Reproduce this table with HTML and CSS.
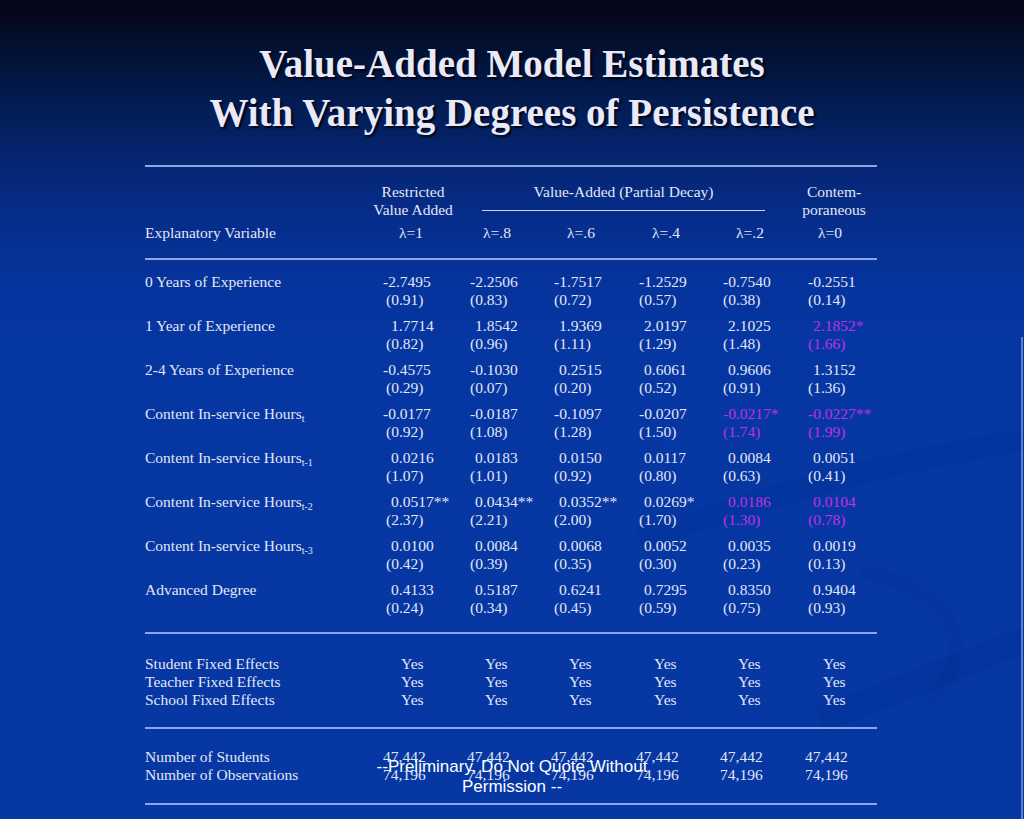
FILE: index.html
```html
<!DOCTYPE html>
<html lang="en">
<head>
<meta charset="utf-8">
<title>Value-Added Model Estimates</title>
<link rel="stylesheet" href="styles.css">
</head>
<body>
<div class="slide">
  <svg class="decor" width="1024" height="819" viewBox="0 0 1024 819" aria-hidden="true">
    <path d="M640 540 C 780 490, 900 460, 1024 440" stroke="#022a88" stroke-width="22" fill="none" opacity="0.18"/>
    <path d="M860 572 C 950 585, 985 650, 925 705" stroke="#022a88" stroke-width="14" fill="none" opacity="0.16"/>
    <path d="M820 720 C 900 690, 960 665, 1024 640" stroke="#022a88" stroke-width="26" fill="none" opacity="0.2"/>
    <path d="M560 500 C 640 470, 700 430, 760 400" stroke="#0a40b0" stroke-width="30" fill="none" opacity="0.15"/>
    <rect x="1021" y="337" width="2" height="482" fill="#7390d8" opacity="0.8"/>
  </svg>

  <h1 class="title">Value-Added Model Estimates<br>With Varying Degrees of Persistence</h1>

  <div class="table">
    <div class="rule r1"></div>

    <div class="head cols">
      <div class="h-restricted">Restricted<br>Value Added</div>
      <div class="h-va"><div>Value-Added (Partial Decay)</div><div class="h-line"></div></div>
      <div class="h-cont">Contem-<br>poraneous</div>
    </div>

    <div class="lam cols">
      <div>Explanatory Variable</div>
      <div class="lc">λ=1</div>
      <div class="lc">λ=.8</div>
      <div class="lc">λ=.6</div>
      <div class="lc">λ=.4</div>
      <div class="lc">λ=.2</div>
      <div class="lc last">λ=0</div>
    </div>

    <div class="rule r2"></div>

    <div class="groups">
      <div class="grp cols">
        <div>0 Years of Experience</div>
        <div><span class="v m">-2.7495</span><span class="v">(0.91)</span></div>
        <div><span class="v">-2.2506</span><span class="v">(0.83)</span></div>
        <div><span class="v">-1.7517</span><span class="v">(0.72)</span></div>
        <div><span class="v">-1.2529</span><span class="v">(0.57)</span></div>
        <div><span class="v">-0.7540</span><span class="v">(0.38)</span></div>
        <div><span class="v">-0.2551</span><span class="v">(0.14)</span></div>
      </div>
      <div class="grp cols">
        <div>1 Year of Experience</div>
        <div><span class="v p">1.7714</span><span class="v">(0.82)</span></div>
        <div><span class="v p">1.8542</span><span class="v">(0.96)</span></div>
        <div><span class="v p">1.9369</span><span class="v">(1.11)</span></div>
        <div><span class="v p">2.0197</span><span class="v">(1.29)</span></div>
        <div><span class="v p">2.1025</span><span class="v">(1.48)</span></div>
        <div class="sig"><span class="v p">2.1852*</span><span class="v">(1.66)</span></div>
      </div>
      <div class="grp cols">
        <div>2-4 Years of Experience</div>
        <div><span class="v m">-0.4575</span><span class="v">(0.29)</span></div>
        <div><span class="v">-0.1030</span><span class="v">(0.07)</span></div>
        <div><span class="v p">0.2515</span><span class="v">(0.20)</span></div>
        <div><span class="v p">0.6061</span><span class="v">(0.52)</span></div>
        <div><span class="v p">0.9606</span><span class="v">(0.91)</span></div>
        <div><span class="v p">1.3152</span><span class="v">(1.36)</span></div>
      </div>
      <div class="grp cols">
        <div>Content In-service Hours<span class="sub">t</span></div>
        <div><span class="v m">-0.0177</span><span class="v">(0.92)</span></div>
        <div><span class="v">-0.0187</span><span class="v">(1.08)</span></div>
        <div><span class="v">-0.1097</span><span class="v">(1.28)</span></div>
        <div><span class="v">-0.0207</span><span class="v">(1.50)</span></div>
        <div class="sig"><span class="v">-0.0217*</span><span class="v">(1.74)</span></div>
        <div class="sig"><span class="v">-0.0227**</span><span class="v">(1.99)</span></div>
      </div>
      <div class="grp cols">
        <div>Content In-service Hours<span class="sub">t-1</span></div>
        <div><span class="v p">0.0216</span><span class="v">(1.07)</span></div>
        <div><span class="v p">0.0183</span><span class="v">(1.01)</span></div>
        <div><span class="v p">0.0150</span><span class="v">(0.92)</span></div>
        <div><span class="v p">0.0117</span><span class="v">(0.80)</span></div>
        <div><span class="v p">0.0084</span><span class="v">(0.63)</span></div>
        <div><span class="v p">0.0051</span><span class="v">(0.41)</span></div>
      </div>
      <div class="grp cols">
        <div>Content In-service Hours<span class="sub">t-2</span></div>
        <div><span class="v p">0.0517**</span><span class="v">(2.37)</span></div>
        <div><span class="v p">0.0434**</span><span class="v">(2.21)</span></div>
        <div><span class="v p">0.0352**</span><span class="v">(2.00)</span></div>
        <div><span class="v p">0.0269*</span><span class="v">(1.70)</span></div>
        <div class="sig"><span class="v p">0.0186</span><span class="v">(1.30)</span></div>
        <div class="sig"><span class="v p">0.0104</span><span class="v">(0.78)</span></div>
      </div>
      <div class="grp cols">
        <div>Content In-service Hours<span class="sub">t-3</span></div>
        <div><span class="v p">0.0100</span><span class="v">(0.42)</span></div>
        <div><span class="v p">0.0084</span><span class="v">(0.39)</span></div>
        <div><span class="v p">0.0068</span><span class="v">(0.35)</span></div>
        <div><span class="v p">0.0052</span><span class="v">(0.30)</span></div>
        <div><span class="v p">0.0035</span><span class="v">(0.23)</span></div>
        <div><span class="v p">0.0019</span><span class="v">(0.13)</span></div>
      </div>
      <div class="grp cols">
        <div>Advanced Degree</div>
        <div><span class="v p">0.4133</span><span class="v">(0.24)</span></div>
        <div><span class="v p">0.5187</span><span class="v">(0.34)</span></div>
        <div><span class="v p">0.6241</span><span class="v">(0.45)</span></div>
        <div><span class="v p">0.7295</span><span class="v">(0.59)</span></div>
        <div><span class="v p">0.8350</span><span class="v">(0.75)</span></div>
        <div><span class="v p">0.9404</span><span class="v">(0.93)</span></div>
      </div>
    </div>

    <div class="rule r3"></div>

    <div class="fe">
      <div class="cols">
        <div>Student Fixed Effects</div>
        <div class="yes">Yes</div><div class="yes">Yes</div><div class="yes">Yes</div><div class="yes">Yes</div><div class="yes">Yes</div><div class="yes">Yes</div>
      </div>
      <div class="cols">
        <div>Teacher Fixed Effects</div>
        <div class="yes">Yes</div><div class="yes">Yes</div><div class="yes">Yes</div><div class="yes">Yes</div><div class="yes">Yes</div><div class="yes">Yes</div>
      </div>
      <div class="cols">
        <div>School Fixed Effects</div>
        <div class="yes">Yes</div><div class="yes">Yes</div><div class="yes">Yes</div><div class="yes">Yes</div><div class="yes">Yes</div><div class="yes">Yes</div>
      </div>
    </div>

    <div class="rule r4"></div>

    <div class="ns">
      <div class="cols">
        <div>Number of Students</div>
        <div class="n">47,442</div><div class="n">47,442</div><div class="n">47,442</div><div class="n">47,442</div><div class="n">47,442</div><div class="n">47,442</div>
      </div>
      <div class="cols">
        <div>Number of Observations</div>
        <div class="n">74,196</div><div class="n">74,196</div><div class="n">74,196</div><div class="n">74,196</div><div class="n">74,196</div><div class="n">74,196</div>
      </div>
    </div>

    <div class="rule r5"></div>
  </div>

  <div class="watermark">--Preliminary, Do Not Quote Without<br>Permission --</div>
</div>
</body>
</html>
```

FILE: styles.css
```css
html, body {
  margin: 0;
  padding: 0;
}

body {
  width: 1024px;
  height: 819px;
  overflow: hidden;
  font-family: "Liberation Serif", "Times New Roman", serif;
  color: #e3e7f6;
  background: linear-gradient(to bottom,
    #05051a 0px,
    #04061c 14px,
    #020f2c 40px,
    #03194a 90px,
    #05246c 150px,
    #062c88 210px,
    #06339c 280px,
    #0636a2 340px,
    #0637a3 819px);
}

.slide {
  position: relative;
  width: 1024px;
  height: 819px;
}

.decor {
  position: absolute;
  left: 0;
  top: 0;
}

.title {
  position: relative;
  margin: 0;
  padding-top: 39px;
  font-size: 39px;
  line-height: 49px;
  font-weight: bold;
  text-align: center;
  color: #e9e9f8;
  text-shadow: 2px 2px 2px rgba(0, 0, 16, 0.9);
}

.table {
  position: relative;
  margin-left: 145px;
  width: 732px;
  font-size: 15.5px;
  line-height: 18px;
  white-space: nowrap;
}

.cols {
  display: grid;
  grid-template-columns: 241px 84px 84px 85px 84px 85px 69px;
}

.rule {
  height: 2px;
  background: #8ea7e4;
}

.r1 { margin-top: 28px; }
.r2 { margin-top: 16px; }
.r3 { margin-top: 15px; }
.r4 { margin-top: 18px; }
.r5 { margin-top: 19px; }

.head {
  margin-top: 16px;
  grid-template-rows: 36px;
}

.h-restricted {
  grid-column: 2;
  margin-left: -30px;
  text-align: center;
}

.h-va {
  grid-column: 3 / 7;
  margin-left: 12px;
  width: 283px;
  text-align: center;
}

.h-line {
  margin-top: 9px;
  height: 1px;
  background: #c9d3f0;
}

.h-cont {
  grid-column: 7;
  margin-left: -11px;
  margin-right: 6px;
  text-align: center;
}

.lam {
  margin-top: 5px;
}

.lc {
  padding-left: 13px;
}

.lc.last {
  padding-left: 10px;
}

.groups {
  margin-top: 13px;
  display: flex;
  flex-direction: column;
  gap: 8px;
}

.grp {
  height: 36px;
}

.v {
  display: block;
}

.v.p {
  padding-left: 5px;
}

.v.m {
  margin-left: -3px;
}

.sig {
  color: #c22ee8;
}

.sub {
  font-size: 10px;
  line-height: 0;
  vertical-align: -3px;
}

.fe {
  margin-top: 21px;
}

.yes {
  padding-left: 15px;
}

.ns {
  margin-top: 19px;
}

.n {
  margin-left: -3px;
}

.watermark {
  position: absolute;
  left: 0;
  right: 0;
  top: 757px;
  text-align: center;
  font-family: "Liberation Sans", Arial, sans-serif;
  font-size: 17px;
  line-height: 20px;
  color: #ffffff;
}
```
